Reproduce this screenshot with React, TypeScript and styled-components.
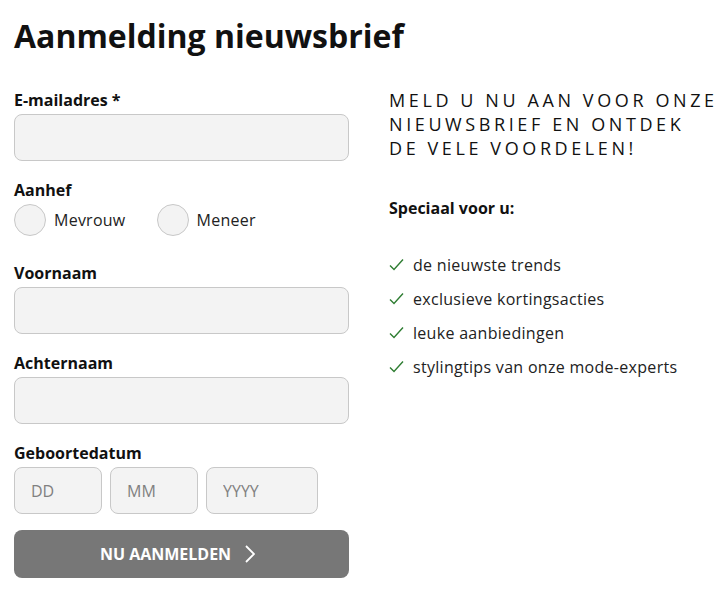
import React from "react";
import styled, { createGlobalStyle } from "styled-components";

const Global = createGlobalStyle`
  html, body { margin: 0; padding: 0; background: #fff; }
  body { font-family: "Open Sans", "Liberation Sans", sans-serif; color: #111; }
  * { box-sizing: border-box; }
`;

const Page = styled.div`
  padding: 14px 0 0 14px;
`;

const Title = styled.h1`
  margin: 0 0 26px;
  font-size: 32px;
  font-weight: 700;
  line-height: 44px;
  color: #111;
`;

const Columns = styled.div`
  display: grid;
  grid-template-columns: 335px 1fr;
  column-gap: 40px;
`;

const Form = styled.form`
  display: flex;
  flex-direction: column;
  padding-top: 5px;
`;

const Field = styled.div<{ $mb?: number }>`
  display: flex;
  flex-direction: column;
  margin-bottom: ${(p) => p.$mb ?? 18}px;
`;

const Label = styled.label`
  font-size: 16px;
  font-weight: 700;
  line-height: 22px;
  margin-bottom: 3px;
`;

const Input = styled.input<{ $w?: number }>`
  width: ${(p) => (p.$w ? `${p.$w}px` : "100%")};
  height: 47px;
  background: #f3f3f3;
  border: 1px solid #c8c8c8;
  border-radius: 8px;
  padding: 0 16px;
  font-family: inherit;
  font-size: 16px;
  color: #111;
  &::placeholder { color: #808080; }
`;

const RadioRow = styled.div`
  display: flex;
  align-items: center;
  gap: 31px;
`;

const RadioOpt = styled.label`
  display: flex;
  align-items: center;
  gap: 8px;
  font-size: 16px;
  letter-spacing: 0.25px;
  color: #222;
`;

const Circle = styled.span`
  width: 32px;
  height: 32px;
  border-radius: 50%;
  background: #f3f3f3;
  border: 1px solid #c8c8c8;
`;

const DateRow = styled.div`
  display: flex;
  gap: 8px;
`;

const Button = styled.button`
  width: 100%;
  height: 48px;
  background: #777;
  border: none;
  border-radius: 8px;
  color: #fff;
  font-family: inherit;
  font-size: 16px;
  font-weight: 700;
  display: flex;
  align-items: center;
  justify-content: center;
  gap: 14px;
  padding: 0 8px 0 0;
  margin-top: 16px;
`;

const Side = styled.div`
  display: flex;
  flex-direction: column;
  padding-top: 4px;
`;

const Promo = styled.p`
  margin: 0 0 37px;
  font-size: 18px;
  line-height: 24px;
  letter-spacing: 3.6px;
  text-transform: uppercase;
  color: #111;
`;

const Sub = styled.p`
  margin: 0 0 35px;
  font-size: 16px;
  font-weight: 700;
  line-height: 22px;
`;

const List = styled.ul`
  margin: 0;
  padding: 0;
  list-style: none;
  display: flex;
  flex-direction: column;
  gap: 12px;
`;

const Item = styled.li`
  display: flex;
  align-items: center;
  gap: 9px;
  font-size: 16px;
  letter-spacing: 0.3px;
  line-height: 22px;
  color: #222;
`;

const Check = () => (
  <svg width="15" height="14" viewBox="0 0 15 14" fill="none">
    <path d="M1 7.5 L5 11.5 L14 1.5" stroke="#2e7d32" strokeWidth="1.4" />
  </svg>
);

const Chevron = () => (
  <svg width="10" height="18" viewBox="0 0 10 18" fill="none">
    <path d="M1 1 L9 9 L1 17" stroke="#fff" strokeWidth="1.8" />
  </svg>
);

const perks = [
  "de nieuwste trends",
  "exclusieve kortingsacties",
  "leuke aanbiedingen",
  "stylingtips van onze mode-experts",
];

export default function App() {
  return (
    <Page>
      <Global />
      <Title>Aanmelding nieuwsbrief</Title>
      <Columns>
        <Form onSubmit={(e) => e.preventDefault()}>
          <Field>
            <Label>E-mailadres *</Label>
            <Input />
          </Field>
          <Field $mb={26}>
            <Label>Aanhef</Label>
            <RadioRow>
              <RadioOpt><Circle />Mevrouw</RadioOpt>
              <RadioOpt><Circle />Meneer</RadioOpt>
            </RadioRow>
          </Field>
          <Field>
            <Label>Voornaam</Label>
            <Input />
          </Field>
          <Field>
            <Label>Achternaam</Label>
            <Input />
          </Field>
          <Field $mb={0}>
            <Label>Geboortedatum</Label>
            <DateRow>
              <Input $w={88} placeholder="DD" />
              <Input $w={88} placeholder="MM" />
              <Input $w={112} placeholder="YYYY" />
            </DateRow>
          </Field>
          <Button type="submit">NU AANMELDEN <Chevron /></Button>
        </Form>
        <Side>
          <Promo>Meld u nu aan voor onze<br />nieuwsbrief en ontdek<br />de vele voordelen!</Promo>
          <Sub>Speciaal voor u:</Sub>
          <List>
            {perks.map((p) => (
              <Item key={p}><Check />{p}</Item>
            ))}
          </List>
        </Side>
      </Columns>
    </Page>
  );
}
